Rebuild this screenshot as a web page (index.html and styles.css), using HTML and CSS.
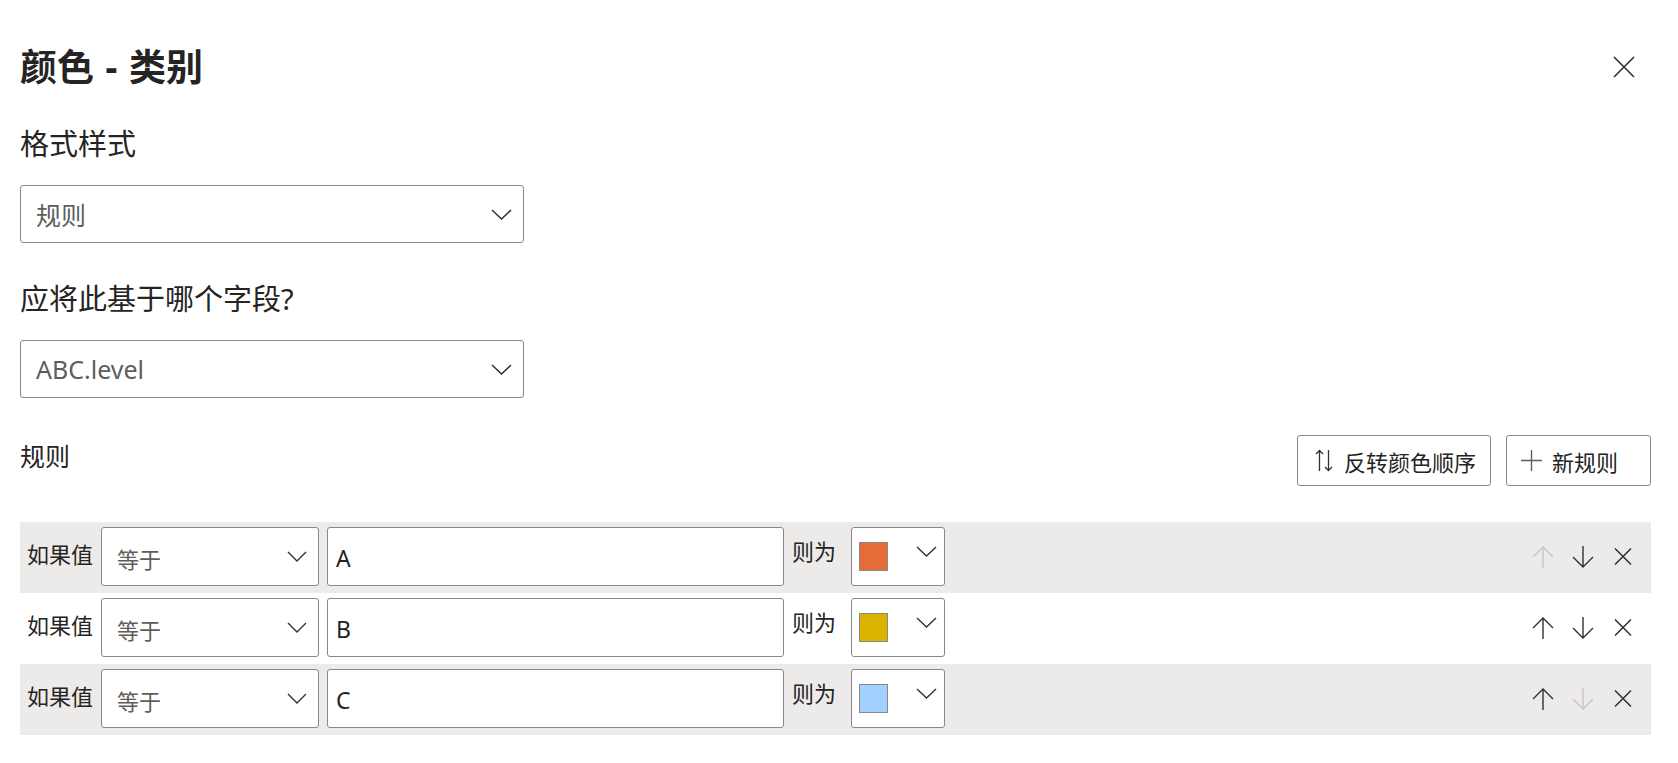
FILE: index.html
```html
<!DOCTYPE html>
<html lang="zh-CN">
<head>
<meta charset="utf-8">
<title>颜色 - 类别</title>
<link rel="stylesheet" href="styles.css">
</head>
<body>
<div class="panel">
  <header class="head">
    <h1 class="title">颜色 - 类别</h1>
    <button class="icon-btn close" aria-label="关闭">
      <svg width="22" height="22" viewBox="0 0 22 22"><path d="M1 1L21 21M21 1L1 21" stroke="#323130" stroke-width="1.6" fill="none"/></svg>
    </button>
  </header>

  <div class="label first">格式样式</div>
  <div class="select">
    <span class="select-text">规则</span>
    <svg class="chev" width="21" height="11" viewBox="0 0 21 11"><path d="M1 1L10.5 10L20 1" stroke="#323130" stroke-width="1.5" fill="none"/></svg>
  </div>

  <div class="label">应将此基于哪个字段?</div>
  <div class="select">
    <span class="select-text">ABC.level</span>
    <svg class="chev" width="21" height="11" viewBox="0 0 21 11"><path d="M1 1L10.5 10L20 1" stroke="#323130" stroke-width="1.5" fill="none"/></svg>
  </div>

  <div class="rules-head">
    <span class="rules-label">规则</span>
    <div class="actions">
      <button class="btn btn-reverse">
        <svg width="18" height="23" viewBox="0 0 18 23"><path d="M4.5 22V1.5M1 5L4.5 1.5L8 5" stroke="#323130" stroke-width="1.3" fill="none"/><path d="M13.5 1V21.5M10 18L13.5 21.5L17 18" stroke="#323130" stroke-width="1.3" fill="none"/></svg>
        <span>反转颜色顺序</span>
      </button>
      <button class="btn btn-new">
        <svg width="21" height="21" viewBox="0 0 21 21"><path d="M10.5 0V21M0 10.5H21" stroke="#605e5c" stroke-width="1.4" fill="none"/></svg>
        <span>新规则</span>
      </button>
    </div>
  </div>

  <div class="rules">
    <div class="rule shaded">
      <span class="rule-label">如果值</span>
      <div class="op">
        <span class="op-text">等于</span>
        <svg class="op-chev" width="20" height="11" viewBox="0 0 20 11"><path d="M1 1L10 10L19 1" stroke="#323130" stroke-width="1.4" fill="none"/></svg>
      </div>
      <div class="value">A</div>
      <span class="then">则为</span>
      <div class="color">
        <span class="swatch" style="background:#e66c37"></span>
        <svg class="color-chev" width="21" height="11" viewBox="0 0 21 11"><path d="M1 1L10.5 10L20 1" stroke="#323130" stroke-width="1.4" fill="none"/></svg>
      </div>
      <div class="tools">
        <button class="icon-btn" aria-label="上移"><svg width="22" height="22" viewBox="0 0 22 22"><path d="M11 22V1M1 11L11 1L21 11" stroke="#c8c6c4" stroke-width="1.4" fill="none"/></svg></button>
        <button class="icon-btn" aria-label="下移"><svg width="22" height="22" viewBox="0 0 22 22"><path d="M11 0V21M1 11L11 21L21 11" stroke="#323130" stroke-width="1.4" fill="none"/></svg></button>
        <button class="icon-btn" aria-label="删除"><svg width="18" height="17" viewBox="0 0 18 17"><path d="M1 0.5L17 16.5M17 0.5L1 16.5" stroke="#323130" stroke-width="1.5" fill="none"/></svg></button>
      </div>
    </div>

    <div class="rule">
      <span class="rule-label">如果值</span>
      <div class="op">
        <span class="op-text">等于</span>
        <svg class="op-chev" width="20" height="11" viewBox="0 0 20 11"><path d="M1 1L10 10L19 1" stroke="#323130" stroke-width="1.4" fill="none"/></svg>
      </div>
      <div class="value">B</div>
      <span class="then">则为</span>
      <div class="color">
        <span class="swatch" style="background:#d9b300"></span>
        <svg class="color-chev" width="21" height="11" viewBox="0 0 21 11"><path d="M1 1L10.5 10L20 1" stroke="#323130" stroke-width="1.4" fill="none"/></svg>
      </div>
      <div class="tools">
        <button class="icon-btn" aria-label="上移"><svg width="22" height="22" viewBox="0 0 22 22"><path d="M11 22V1M1 11L11 1L21 11" stroke="#323130" stroke-width="1.4" fill="none"/></svg></button>
        <button class="icon-btn" aria-label="下移"><svg width="22" height="22" viewBox="0 0 22 22"><path d="M11 0V21M1 11L11 21L21 11" stroke="#323130" stroke-width="1.4" fill="none"/></svg></button>
        <button class="icon-btn" aria-label="删除"><svg width="18" height="17" viewBox="0 0 18 17"><path d="M1 0.5L17 16.5M17 0.5L1 16.5" stroke="#323130" stroke-width="1.5" fill="none"/></svg></button>
      </div>
    </div>

    <div class="rule shaded">
      <span class="rule-label">如果值</span>
      <div class="op">
        <span class="op-text">等于</span>
        <svg class="op-chev" width="20" height="11" viewBox="0 0 20 11"><path d="M1 1L10 10L19 1" stroke="#323130" stroke-width="1.4" fill="none"/></svg>
      </div>
      <div class="value">C</div>
      <span class="then">则为</span>
      <div class="color">
        <span class="swatch" style="background:#a0d1ff"></span>
        <svg class="color-chev" width="21" height="11" viewBox="0 0 21 11"><path d="M1 1L10.5 10L20 1" stroke="#323130" stroke-width="1.4" fill="none"/></svg>
      </div>
      <div class="tools">
        <button class="icon-btn" aria-label="上移"><svg width="22" height="22" viewBox="0 0 22 22"><path d="M11 22V1M1 11L11 1L21 11" stroke="#323130" stroke-width="1.4" fill="none"/></svg></button>
        <button class="icon-btn" aria-label="下移"><svg width="22" height="22" viewBox="0 0 22 22"><path d="M11 0V21M1 11L11 21L21 11" stroke="#c8c6c4" stroke-width="1.4" fill="none"/></svg></button>
        <button class="icon-btn" aria-label="删除"><svg width="18" height="17" viewBox="0 0 18 17"><path d="M1 0.5L17 16.5M17 0.5L1 16.5" stroke="#323130" stroke-width="1.5" fill="none"/></svg></button>
      </div>
    </div>
  </div>
</div>
</body>
</html>
```

FILE: styles.css
```css
* { box-sizing: border-box; }

html, body {
  margin: 0;
  padding: 0;
  background: #ffffff;
}

body {
  font-family: "Noto Sans", "Noto Sans CJK SC", sans-serif;
  color: #252423;
}

.panel {
  padding: 44px 27px 0 20px;
  display: flex;
  flex-direction: column;
}

.head {
  display: flex;
  align-items: center;
  justify-content: space-between;
  height: 46px;
}

.title {
  margin: 0;
  font-size: 37px;
  line-height: 46px;
  font-weight: 700;
  word-spacing: 2px;
  color: #252423;
}

.icon-btn {
  width: 40px;
  height: 40px;
  border: 0;
  padding: 0;
  background: transparent;
  display: flex;
  align-items: center;
  justify-content: center;
}

.close {
  margin-right: 7px;
}

.label {
  font-size: 29px;
  line-height: 36px;
  margin-top: 38px;
  margin-bottom: 23px;
  color: #252423;
}

.label.first {
  margin-top: 36px;
  margin-bottom: 23px;
}

.select {
  width: 504px;
  height: 58px;
  border: 1px solid #8a8886;
  border-radius: 3px;
  display: flex;
  align-items: center;
  justify-content: space-between;
  padding: 0 11px 0 15px;
}

.select-text {
  font-size: 25px;
  color: #605e5c;
}

.rules-head {
  display: flex;
  justify-content: space-between;
  align-items: center;
  margin-top: 37px;
  height: 51px;
}

.rules-label {
  font-size: 25px;
  line-height: 40px;
  margin-top: -10px;
  color: #252423;
}

.actions {
  display: flex;
  gap: 15px;
}

.btn {
  height: 51px;
  border: 1px solid #8a8886;
  border-radius: 3px;
  background: #fff;
  display: flex;
  align-items: center;
  font-family: "Noto Sans", "Noto Sans CJK SC", sans-serif;
  font-size: 22px;
  color: #252423;
  padding: 0;
}

.btn-reverse {
  width: 194px;
  padding-left: 17px;
  gap: 11px;
}

.btn-new {
  width: 145px;
  padding-left: 14px;
  gap: 10px;
}

.rules {
  margin-top: 36px;
  display: flex;
  flex-direction: column;
}

.rule {
  height: 71px;
  display: flex;
  align-items: flex-start;
  padding: 5px 0 0 7px;
}

.rule.shaded {
  background: #edebe9;
}

.rule-label {
  font-size: 22px;
  line-height: 55px;
  width: 66px;
  white-space: nowrap;
  color: #252423;
}

.op {
  margin-left: 8px;
  width: 218px;
  height: 59px;
  border: 1px solid #8a8886;
  border-radius: 3px;
  background: #fff;
  display: flex;
  align-items: center;
  justify-content: space-between;
  padding: 0 11px 0 15px;
}

.op-text {
  font-size: 22px;
  color: #605e5c;
  padding-top: 2px;
}

.value {
  margin-left: 8px;
  width: 457px;
  height: 59px;
  border: 1px solid #8a8886;
  border-radius: 3px;
  background: #fff;
  display: flex;
  align-items: center;
  padding: 2px 0 0 8px;
  font-size: 23px;
  color: #252423;
}

.then {
  margin-left: 8px;
  width: 59px;
  font-size: 22px;
  line-height: 49px;
  color: #252423;
}

.color {
  width: 94px;
  height: 59px;
  border: 1px solid #8a8886;
  border-radius: 3px;
  background: #fff;
  display: flex;
  align-items: flex-start;
  justify-content: space-between;
  padding: 14px 7px 0 7px;
}

.swatch {
  width: 29px;
  height: 29px;
  border: 1px solid #8a8886;
}

.color-chev {
  margin-top: 4px;
}

.tools {
  margin-left: auto;
  margin-right: 8px;
  display: flex;
  height: 59px;
  align-items: center;
}
```
